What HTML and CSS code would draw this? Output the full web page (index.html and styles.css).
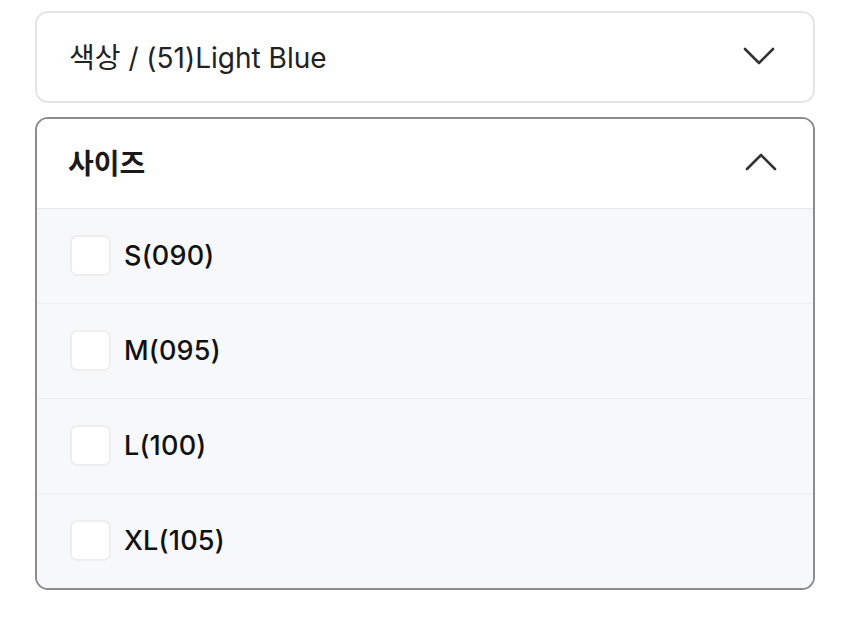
FILE: index.html
```html
<!DOCTYPE html>
<html lang="ko">
<head>
<meta charset="utf-8">
<link rel="stylesheet" href="styles.css">
</head>
<body>
<div class="wrap">
  <div class="select">
    <span class="select-label">색상 / (51)Light Blue</span>
    <svg class="chev" width="32" height="18" viewBox="0 0 32 18"><path d="M2 2 L16 16 L30 2" fill="none" stroke="#333" stroke-width="2.6" stroke-linecap="round" stroke-linejoin="round"/></svg>
  </div>
  <div class="panel">
    <div class="panel-head">
      <span class="panel-title">사이즈</span>
      <svg class="chev" width="32" height="18" viewBox="0 0 32 18"><path d="M2 16 L16 2 L30 16" fill="none" stroke="#333" stroke-width="2.6" stroke-linecap="round" stroke-linejoin="round"/></svg>
    </div>
    <ul class="options">
      <li class="option"><span class="box"></span><span class="opt-label">S(090)</span></li>
      <li class="option"><span class="box"></span><span class="opt-label">M(095)</span></li>
      <li class="option"><span class="box"></span><span class="opt-label">L(100)</span></li>
      <li class="option"><span class="box"></span><span class="opt-label">XL(105)</span></li>
    </ul>
  </div>
</div>
</body>
</html>
```
FILE: styles.css
```css
* { box-sizing: border-box; }
html, body { margin: 0; background: #fff; }
body {
  font-family: Inter, "Noto Sans CJK KR", "Noto Sans", sans-serif;
  color: #1a1a1a;
}
.wrap {
  padding: 11px 35px 0 35px;
  display: flex;
  flex-direction: column;
  gap: 14px;
}
.select {
  height: 92px;
  border: 2px solid #e4e4e4;
  border-radius: 13px;
  display: flex;
  align-items: center;
  justify-content: space-between;
  padding: 0 38px 2px 32px;
}
.select-label {
  font-size: 28px;
  letter-spacing: 0;
  color: #222;
}
.panel {
  border: 2px solid #8c8c8c;
  border-radius: 13px;
  overflow: hidden;
}
.panel-head {
  height: 90px;
  display: flex;
  align-items: center;
  justify-content: space-between;
  padding: 0 36px 4px 31px;
  border-bottom: 1px solid #e6e7ea;
  background: #fff;
}
.panel-title {
  font-size: 28px;
  font-weight: 700;
  letter-spacing: 0;
}
.options {
  list-style: none;
  margin: 0;
  padding: 0;
  background: #f7f8fa;
}
.option {
  height: 95px;
  display: flex;
  align-items: center;
  padding-left: 33px;
  padding-bottom: 2px;
  gap: 13px;
  border-top: 1px solid #eceef1;
}
.option:first-child { border-top: none; height: 94px; }
.box {
  width: 41px;
  height: 41px;
  border: 2px solid #eeeeee;
  border-radius: 7px;
  background: #fff;
}
.opt-label {
  font-size: 27px;
  font-weight: 500;
  letter-spacing: 0.2px;
  color: #111;
}
```
